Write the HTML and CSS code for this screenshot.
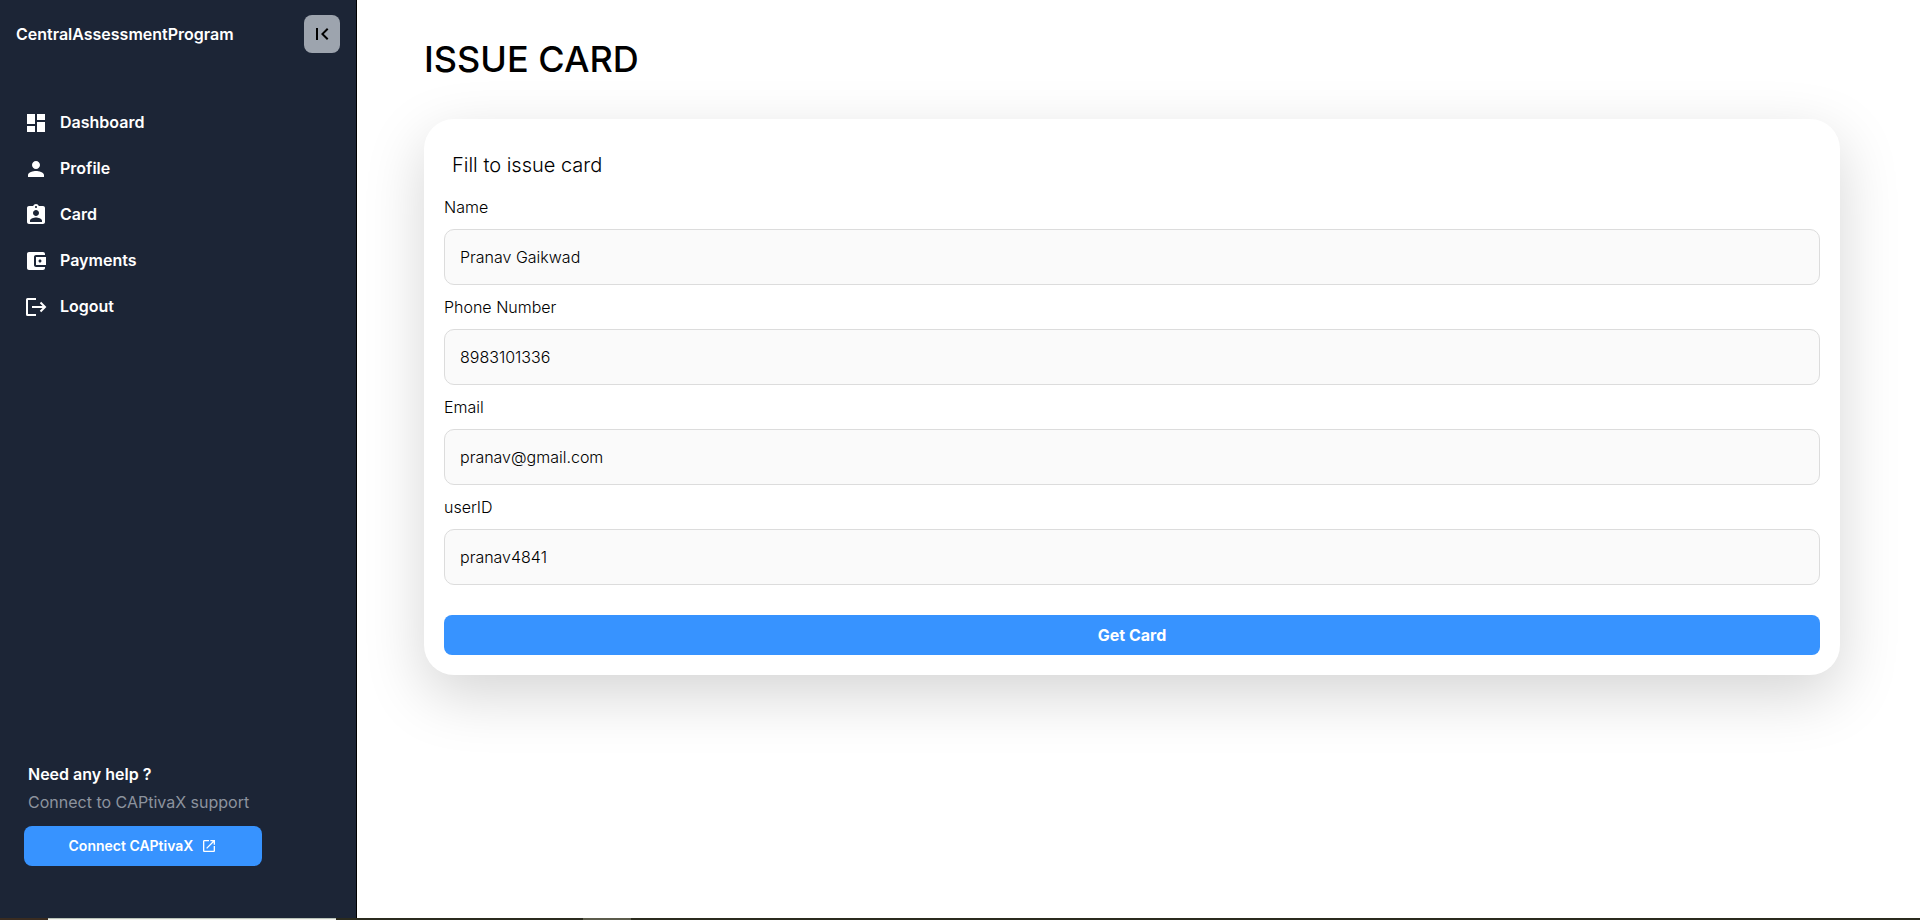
FILE: index.html
```html
<!DOCTYPE html>
<html lang="en">
<head>
<meta charset="utf-8">
<meta name="viewport" content="width=device-width, initial-scale=1">
<title>Issue Card</title>
<link rel="stylesheet" href="styles.css">
</head>
<body>
<div class="app">
  <aside class="sidebar">
    <header class="sidebar-header">
      <span class="brand">CentralAssessmentProgram</span>
      <button class="collapse" type="button" aria-label="Collapse sidebar">
        <svg class="icon" viewBox="0 0 24 24"><path d="M18.41 16.59 13.82 12l4.59-4.59L17 6l-6 6 6 6zM6 6h2v12H6z"/></svg>
      </button>
    </header>
    <nav class="nav">
      <a class="nav-link" href="#"><svg class="icon" viewBox="0 0 24 24"><path d="M3 13h8V3H3zm0 8h8v-6H3zm10 0h8V11h-8zm0-18v6h8V3z"/></svg>Dashboard</a>
      <a class="nav-link" href="#"><svg class="icon" viewBox="0 0 24 24"><path d="M12 12c2.21 0 4-1.79 4-4s-1.79-4-4-4-4 1.79-4 4 1.79 4 4 4m0 2c-2.67 0-8 1.34-8 4v2h16v-2c0-2.66-5.33-4-8-4"/></svg>Profile</a>
      <a class="nav-link" href="#"><svg class="icon" viewBox="0 0 24 24"><path d="M19 3h-4.18C14.4 1.84 13.3 1 12 1s-2.400.84-2.820 2H5c-1.100 0-2 .9-2 2v14c0 1.100.9 2 2 2h14c1.100 0 2-.9 2-2V5c0-1.100-.9-2-2-2m-7 0c.55 0 1 .45 1 1s-.45 1-1 1-1-.45-1-1 .45-1 1-1m0 4c1.660 0 3 1.340 3 3s-1.340 3-3 3-3-1.340-3-3 1.340-3 3-3m6 12H6v-1.400c0-2 4-3.100 6-3.100s6 1.100 6 3.100z"/></svg>Card</a>
      <a class="nav-link" href="#"><svg class="icon" viewBox="0 0 24 24"><path d="M21 18v1c0 1.100-.9 2-2 2H5c-1.110 0-2-.9-2-2V5c0-1.100.89-2 2-2h14c1.100 0 2 .9 2 2v1h-9c-1.110 0-2 .9-2 2v8c0 1.100.89 2 2 2zm-9-2h10V8H12zm4-2.500c-.83 0-1.500-.67-1.500-1.500s.67-1.500 1.500-1.500 1.500.67 1.500 1.500-.67 1.500-1.500 1.500"/></svg>Payments</a>
      <a class="nav-link" href="#"><svg class="icon icon-line" viewBox="0 0 24 24"><path d="M12 4H3.500Q3 4 3 4.500v15Q3 20 3.500 20H12M8 12h12.500M16.500 7.500 21 12l-4.500 4.500"/></svg>Logout</a>
    </nav>
    <section class="help">
      <p class="help-title">Need any help ?</p>
      <p class="help-text">Connect to CAPtivaX support</p>
      <button class="primary help-button" type="button">Connect CAPtivaX
        <svg class="icon-small" viewBox="0 0 24 24"><path d="M19 19H5V5h7V3H5c-1.110 0-2 .9-2 2v14c0 1.100.89 2 2 2h14c1.100 0 2-.9 2-2v-7h-2zM14 3v2h3.590l-9.830 9.830 1.410 1.410L19 6.410V10h2V3z"/></svg>
      </button>
    </section>
  </aside>
  <main class="content">
    <h1 class="title">ISSUE CARD</h1>
    <form class="card">
      <h2 class="card-title">Fill to issue card</h2>
      <label class="label" for="name">Name</label>
      <input class="field" id="name" type="text" value="Pranav Gaikwad">
      <label class="label" for="phone">Phone Number</label>
      <input class="field" id="phone" type="tel" value="8983101336">
      <label class="label" for="email">Email</label>
      <input class="field" id="email" type="email" value="pranav@gmail.com">
      <label class="label" for="user">userID</label>
      <input class="field" id="user" type="text" value="pranav4841">
      <button class="primary submit" type="button">Get Card</button>
    </form>
  </main>
</div>
<div class="strip"><span class="strip-start"></span><span class="strip-tab"></span><span class="strip-gap"></span><span class="strip-item"></span></div>
</body>
</html>
```
FILE: styles.css
```css
* { box-sizing: border-box; }

body {
  display: flex;
  flex-direction: column;
  min-height: 100vh;
  margin: 0;
  background: #fff;
  color: #000;
  font-family: Inter, "Liberation Sans", sans-serif;
  font-size: 16px;
  line-height: 24px;
}

button, input { font: inherit; }

.app { display: flex; flex: 1; }

.sidebar {
  display: flex;
  flex-direction: column;
  flex: 0 0 357px;
  padding: 15px 16px 52px;
  border-right: 1px solid #000;
  background: #1c2536;
  color: #fff;
}

.sidebar-header {
  display: flex;
  align-items: center;
  justify-content: space-between;
  height: 38px;
}

.brand { font-weight: 600; }

.collapse {
  display: flex;
  align-items: center;
  justify-content: center;
  width: 36px;
  height: 38px;
  padding: 0;
  border: 0;
  border-radius: 8px;
  background: #9da4ae;
  color: #000;
}

.icon { width: 24px; height: 24px; flex: none; fill: currentColor; }
.icon-line { fill: none; stroke: currentColor; stroke-width: 2; }
.icon-small { width: 16px; height: 16px; fill: currentColor; }

.nav {
  display: flex;
  flex-direction: column;
  gap: 22px;
  margin-top: 58px;
  padding-left: 8px;
}

.nav-link {
  display: flex;
  gap: 12px;
  color: #fff;
  font-weight: 600;
  line-height: 22px;
  text-decoration: none;
}

.help { margin-top: auto; padding: 0 78px 0 8px; }
.help-title, .help-text { margin: 0 4px 4px; }
.help-title { font-weight: 600; }
.help-text { margin-bottom: 12px; color: #8c939e; white-space: nowrap; }

.primary {
  display: flex;
  align-items: center;
  justify-content: center;
  gap: 8px;
  width: 100%;
  height: 40px;
  padding: 0;
  border: 0;
  border-radius: 8px;
  background: #3793ff;
  color: #fff;
  font-weight: 700;
}

.help-button { font-size: 14px; font-weight: 600; }

.content { flex: 1; padding: 32px 80px 0 67px; }

.title {
  margin: 0 0 33px;
  font-size: 36px;
  font-weight: 500;
  line-height: 54px;
}

.card {
  display: flex;
  flex-direction: column;
  padding: 31px 20px 20px;
  border-radius: 30px;
  background: #fff;
  box-shadow: 0 20px 60px rgba(0, 0, 0, 0.17);
}

.card-title {
  margin: 0 8px 15px;
  font-size: 20px;
  font-weight: 300;
  line-height: 30px;
}

.label { margin-bottom: 10px; font-weight: 300; }

.field {
  width: 100%;
  height: 56px;
  margin-bottom: 10px;
  padding: 0 15px;
  border: 1px solid #dcdcdc;
  border-radius: 10px;
  background: #fafafa;
  color: #000;
  font-weight: 300;
}

.submit { margin-top: 20px; }

.strip { display: flex; height: 2px; background: #2b2b1e; }
.strip-start { width: 48px; background: #3a2c20; }
.strip-tab { width: 288px; border-top: 1px solid #b9c3b9; background: #f4f4ee; }
.strip-gap { width: 247px; }
.strip-item { width: 48px; background: #5c5c4c; }
```
